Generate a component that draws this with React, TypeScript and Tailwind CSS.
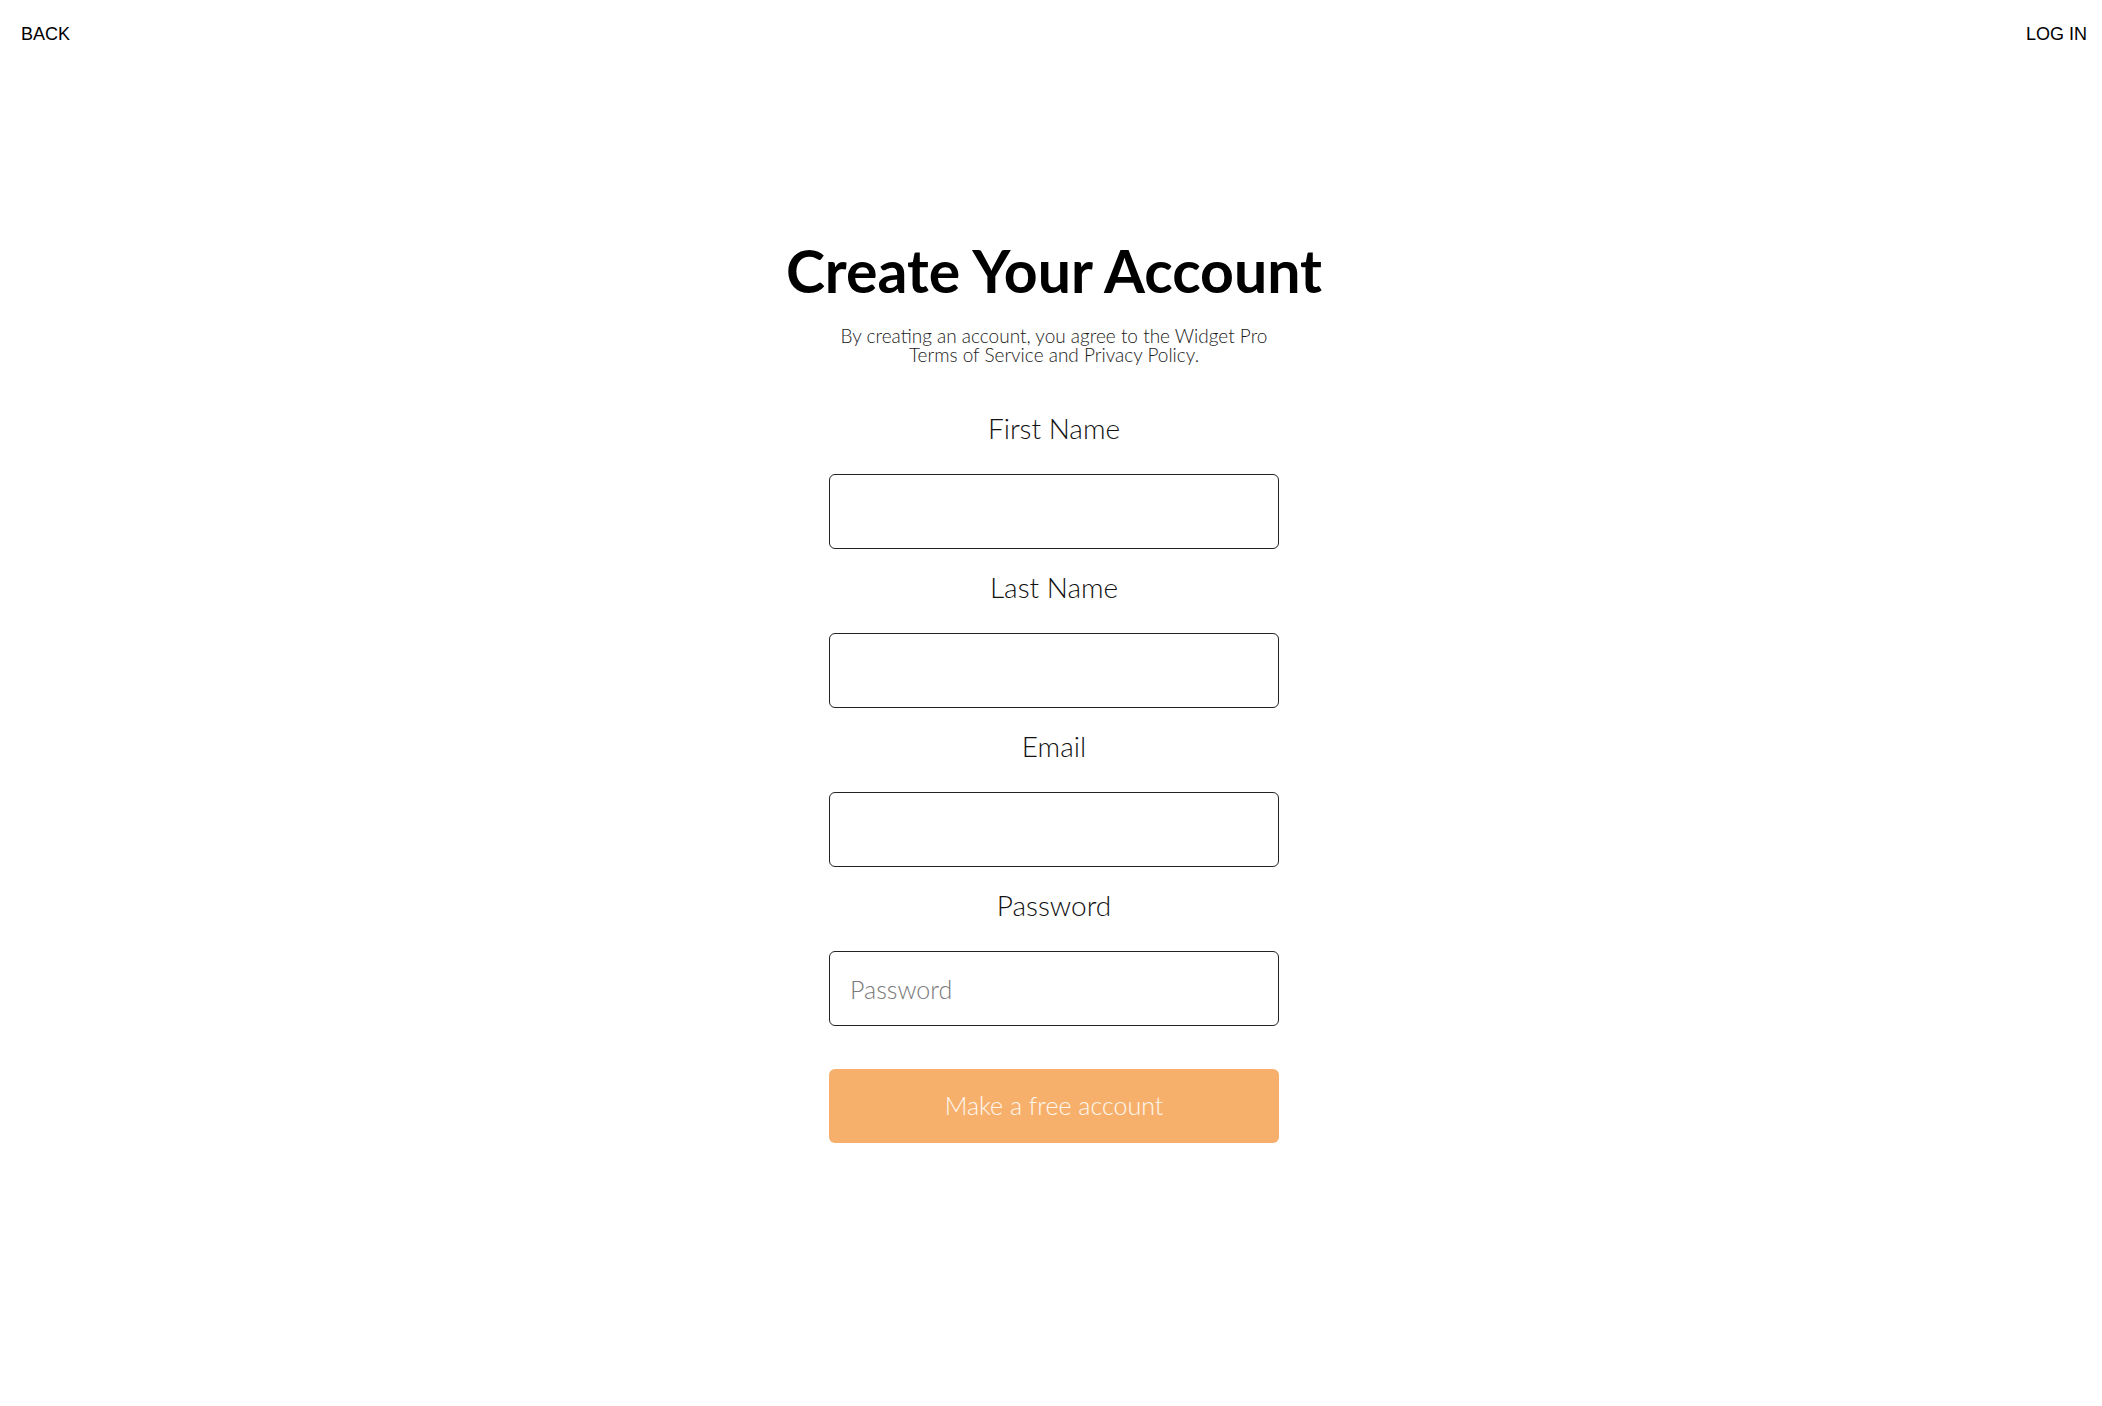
import React from 'react';

const fields = [
  { label: 'First Name', type: 'text', placeholder: '' },
  { label: 'Last Name', type: 'text', placeholder: '' },
  { label: 'Email', type: 'email', placeholder: '' },
  { label: 'Password', type: 'password', placeholder: 'Password' },
];

export default function App() {
  return (
    <div className="min-h-screen bg-white text-black">
      {/* Top bar */}
      <nav className="flex items-start justify-between pl-[21px] pr-[15px] pt-[24px] font-['Liberation_Sans',Arial,sans-serif] text-[18px] leading-[20px]">
        <a href="#" className="text-black">BACK</a>
        <a href="#" className="text-black">LOG IN</a>
      </nav>

      <main className="flex flex-col items-center pt-[197px] pl-[6px] font-['Lato','Noto_Sans',sans-serif]">
        <h1 className="text-[59px] leading-[59px] font-bold">Create Your Account</h1>
        <p className="mt-[26px] w-[450px] text-center text-[19px] leading-[19px] font-light text-[#1a1a1a]">
          By creating an account, you agree to the Widget Pro Terms of Service and Privacy Policy.
        </p>

        <form className="mt-[26px] flex w-[450px] flex-col" onSubmit={(e) => e.preventDefault()}>
          {fields.map((f) => (
            <div key={f.label} className="flex flex-col items-center pt-[21px]">
              <label className="text-[28px] leading-[34px] font-light text-[#111]">{f.label}</label>
              <input
                type={f.type}
                placeholder={f.placeholder}
                className="mt-[29px] h-[75px] w-full rounded-[6px] border border-[#222] bg-white px-[20px] text-[25px] font-light outline-none placeholder:text-[#7a7a7a]"
              />
            </div>
          ))}
          <button
            type="submit"
            className="mt-[43px] h-[74px] w-full rounded-[6px] bg-[#f6b06c] text-[25px] font-light text-white/90"
          >
            Make a free account
          </button>
        </form>
      </main>
    </div>
  );
}
